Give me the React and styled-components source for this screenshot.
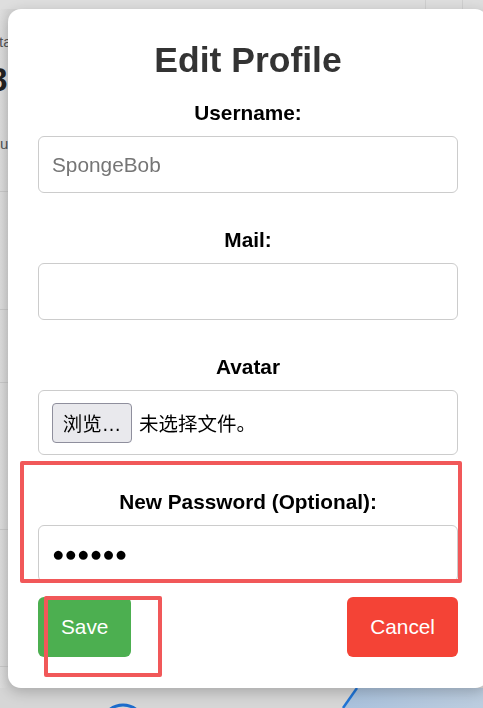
import React from "react";
import styled, { createGlobalStyle } from "styled-components";

const GlobalStyle = createGlobalStyle`
  html, body {
    margin: 0;
    padding: 0;
    overflow: hidden;
    background: #dcdcdc;
    font-family: "Liberation Sans", Arial, "Noto Sans CJK SC", sans-serif;
  }
  * { box-sizing: border-box; }
`;

const Page = styled.div`
  height: 100vh;
  display: grid;
  grid-template-rows: 9px 1fr 20px;
  background: #dcdcdc;
`;

const TopStrip = styled.div`
  display: flex;
  justify-content: flex-end;
  background: #dedede;
`;

const StripCell = styled.div`
  width: ${(p) => p.$w}px;
  border-left: 1px solid #cfcfcf;
`;

const Body = styled.div`
  display: flex;
  overflow: hidden;
`;

const SideColumn = styled.div`
  width: 40px;
  display: flex;
  flex-direction: column;
  background: linear-gradient(90deg, #dddddd 0%, #d6d6d6 20%, #d0d0d0 100%);
`;

const StatCard = styled.div`
  height: ${(p) => p.$h}px;
  border-bottom: 1px solid #c8c8c8;
  overflow: hidden;
  padding-top: ${(p) => p.$pt || 0}px;
`;

const StatLabel = styled.div`
  font-size: 15px;
  line-height: 18px;
  color: #555;
  margin-left: ${(p) => p.$ml || 0}px;
  margin-top: ${(p) => p.$mt || 0}px;
`;

const StatValue = styled.div`
  font-size: 33px;
  line-height: 38px;
  font-weight: 700;
  color: #222;
  margin: 10px 0 0 ${(p) => p.$ml || 0}px;
`;

const ChartArea = styled.div`
  flex: 1;
`;

const Modal = styled.div`
  position: fixed;
  left: 8px;
  top: 9px;
  width: 480px;
  background: #fff;
  border-radius: 13px;
  box-shadow: 0 4px 14px rgba(0, 0, 0, 0.22);
  padding: 31px 30px 31px;
  display: flex;
  flex-direction: column;
`;

const Title = styled.h2`
  margin: 0 0 20px;
  font-size: 35.5px;
  line-height: 41px;
  font-weight: 700;
  color: #333;
  text-align: center;
`;

const Fields = styled.div`
  display: flex;
  flex-direction: column;
  gap: 35px;
`;

const Field = styled.div`
  display: flex;
  flex-direction: column;
  gap: 11px;
`;

const Label = styled.label`
  font-size: 20.8px;
  line-height: 24px;
  font-weight: 700;
  color: #000;
  text-align: center;
`;

const TextInput = styled.input`
  width: 100%;
  height: 57px;
  padding: 0 13px;
  border: 1px solid #cccccc;
  border-radius: 6px;
  font-family: "Liberation Sans", Arial, sans-serif;
  font-size: 20.8px;
  color: #000;
  background: #fff;
  outline: none;
  &::placeholder {
    color: #757575;
  }
`;

const FileBox = styled.div`
  height: 65px;
  padding: 0 13px;
  border: 1px solid #cccccc;
  border-radius: 6px;
  display: flex;
  align-items: center;
  gap: 7px;
`;

const FileButton = styled.button`
  width: 80px;
  height: 40px;
  padding: 0 5px;
  border: 1px solid #8f8f9d;
  border-radius: 4px;
  background: #e9e9ed;
  font-family: "Liberation Sans", "Noto Sans CJK SC", sans-serif;
  font-size: 19.5px;
  color: #000;
  white-space: nowrap;
  overflow: hidden;
`;

const FileText = styled.span`
  font-family: "Noto Sans CJK SC", sans-serif;
  font-size: 19.5px;
  color: #000;
`;

const ButtonRow = styled.div`
  display: flex;
  justify-content: space-between;
  margin-top: 15px;
`;

const ActionButton = styled.button`
  height: 60px;
  padding: 0 23px;
  border: none;
  border-radius: 6px;
  background: ${(p) => (p.$variant === "cancel" ? "#f44336" : "#4caf50")};
  color: #fff;
  font-family: "Liberation Sans", Arial, sans-serif;
  font-size: 20.8px;
`;

const Highlight = styled.div`
  position: absolute;
  left: ${(p) => p.$x}px;
  top: ${(p) => p.$y}px;
  width: ${(p) => p.$w}px;
  height: ${(p) => p.$h}px;
  border: 4.5px solid #f15859;
  border-radius: 2px;
  pointer-events: none;
`;

export default function App() {
  return (
    <>
      <GlobalStyle />
      <Page>
        <TopStrip>
          <StripCell $w={37} />
          <StripCell $w={21} />
        </TopStrip>
        <Body>
          <SideColumn>
            <StatCard $h={183} $pt={24}>
              <StatLabel $ml={-1}>ta</StatLabel>
              <StatValue $ml={-11}>8</StatValue>
              <StatLabel $mt={36}>u</StatLabel>
            </StatCard>
            <StatCard $h={118} />
            <StatCard $h={73} />
            <StatCard $h={147} />
            <StatCard $h={137} />
          </SideColumn>
          <ChartArea />
        </Body>
        <svg width="483" height="20" viewBox="0 0 483 20">
          <defs>
            <linearGradient id="fillg" x1="0" y1="0" x2="1" y2="0">
              <stop offset="0" stopColor="#a9c1dc" />
              <stop offset="1" stopColor="#bccddf" />
            </linearGradient>
          </defs>
          <rect x="0" y="0" width="483" height="20" fill="#d6d6d6" />
          <polygon points="357,0 483,0 483,20 343,20" fill="url(#fillg)" />
          <line x1="357" y1="0" x2="343" y2="20" stroke="#1f74d6" strokeWidth="2.5" />
          <ellipse cx="123" cy="35" rx="20" ry="18" fill="none" stroke="#1d6ccc" strokeWidth="3" />
        </svg>
      </Page>
      <Modal>
        <Title>Edit Profile</Title>
        <Fields>
          <Field>
            <Label>Username:</Label>
            <TextInput type="text" placeholder="SpongeBob" readOnly />
          </Field>
          <Field>
            <Label>Mail:</Label>
            <TextInput type="text" readOnly />
          </Field>
          <Field>
            <Label>Avatar</Label>
            <FileBox>
              <FileButton type="button">浏览…</FileButton>
              <FileText>未选择文件。</FileText>
            </FileBox>
          </Field>
          <Field>
            <Label>New Password (Optional):</Label>
            <TextInput type="text" defaultValue="●●●●●●" readOnly />
          </Field>
        </Fields>
        <ButtonRow>
          <ActionButton type="button">Save</ActionButton>
          <ActionButton type="button" $variant="cancel">Cancel</ActionButton>
        </ButtonRow>
        <Highlight $x={12} $y={452} $w={442} $h={122} />
        <Highlight $x={36} $y={587} $w={118} $h={81} />
      </Modal>
    </>
  );
}
